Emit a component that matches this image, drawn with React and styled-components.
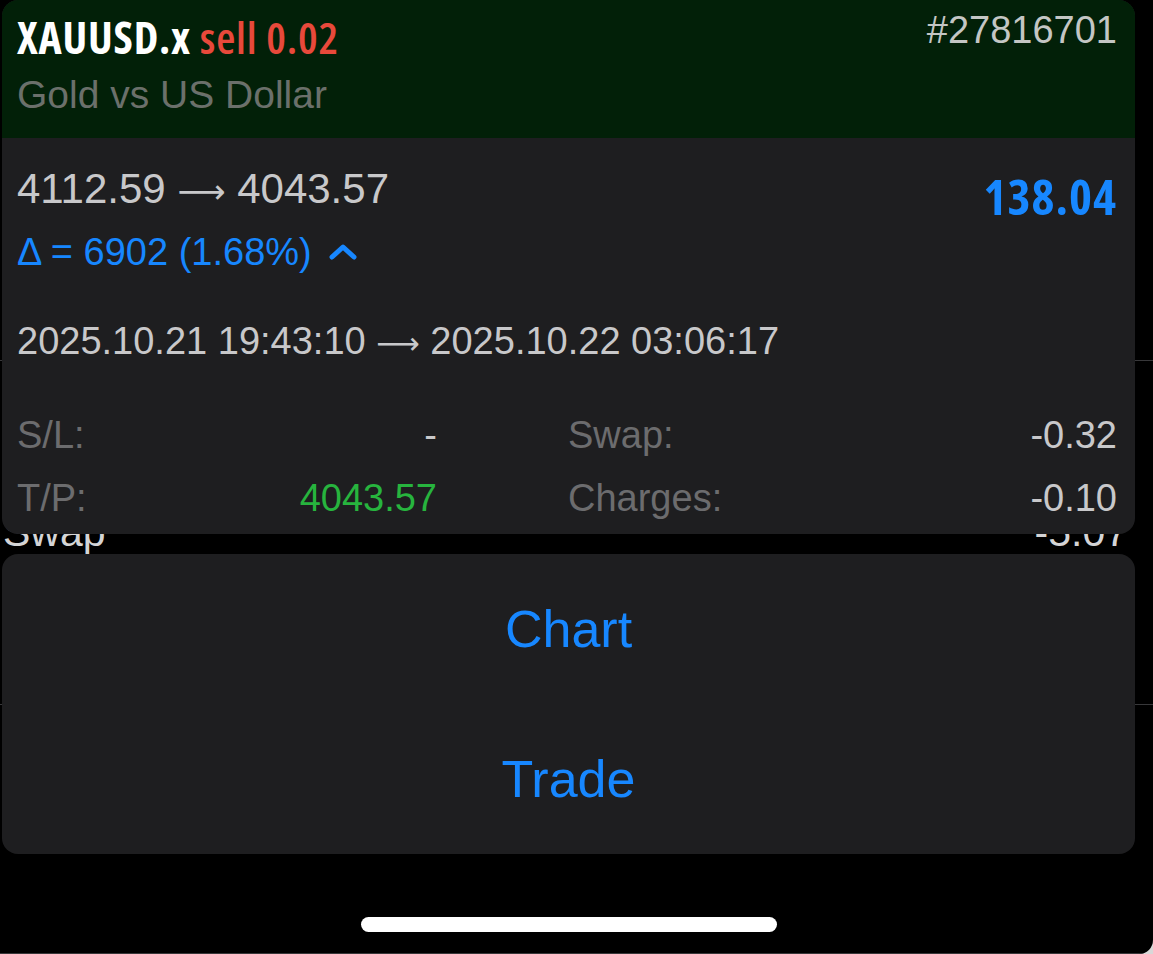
import React from "react";
import styled, { createGlobalStyle } from "styled-components";

const GlobalStyle = createGlobalStyle`
  html, body {
    margin: 0;
    padding: 0;
    background: #d8d8d8;
  }
  body {
    font-family: "Liberation Sans", Arial, sans-serif;
  }
`;

const condensed = `
  font-family: "Open Sans", "Liberation Sans Narrow", "DejaVu Sans Condensed", sans-serif;
  font-stretch: 75%;
  font-weight: 700;
`;

const Screen = styled.div`
  position: relative;
  width: 1153px;
  height: 954px;
  background: #000;
  overflow: hidden;
  border-bottom-right-radius: 14px;
`;

const List = styled.div`
  display: flex;
  flex-direction: column;
`;

const ListRow = styled.div`
  display: flex;
  align-items: center;
  justify-content: space-between;
  height: ${(p) => p.$h}px;
  padding: 0 25px 0 3px;
  border-bottom: 1px solid #38383a;
  box-sizing: border-box;
  color: #d4d4d6;
  font-size: 41px;
`;

const Overlay = styled.div`
  position: absolute;
  top: 0;
  left: 2px;
  width: 1133px;
  display: flex;
  flex-direction: column;
`;

const Card = styled.div`
  background: #1e1e20;
  border-radius: 16px;
  overflow: hidden;
`;

const Header = styled.div`
  background: #022008;
  padding: 12px 18px 20px 15px;
`;

const TitleRow = styled.div`
  display: flex;
  justify-content: space-between;
  align-items: flex-start;
`;

const Title = styled.div`
  ${condensed}
  font-size: 44px;
  letter-spacing: 0.8px;
  line-height: 50px;
  color: #ffffff;
`;

const Side = styled.span`
  color: #e8493b;
  font-weight: 600;
`;

const Ticket = styled.div`
  font-size: 38px;
  line-height: 36px;
  color: #c4c6c4;
`;

const Subtitle = styled.div`
  margin-top: 10px;
  font-size: 39px;
  line-height: 46px;
  color: #6b706b;
`;

const Body = styled.div`
  padding: 26px 18px 13px 15px;
`;

const PriceRow = styled.div`
  display: flex;
  justify-content: space-between;
  align-items: flex-start;
`;

const PriceCol = styled.div`
  display: flex;
  flex-direction: column;
`;

const Prices = styled.div`
  font-size: 42px;
  line-height: 50px;
  color: #c8c8ca;
`;

const Arrow = styled.span`
  font-family: "DejaVu Sans", sans-serif;
  font-weight: 400;
  font-size: 0.8em;
  line-height: 1;
`;

const Delta = styled.div`
  display: flex;
  align-items: center;
  gap: 17px;
  margin-top: 15px;
  font-size: 38px;
  line-height: 46px;
  color: #1787ff;
`;

const Profit = styled.div`
  ${condensed}
  margin-top: 7px;
  font-size: 49px;
  letter-spacing: 1px;
  line-height: 50px;
  color: #1787ff;
`;

const Dates = styled.div`
  margin-top: 43px;
  font-size: 38px;
  line-height: 46px;
  color: #c8c8ca;
`;

const Stats = styled.div`
  display: grid;
  grid-template-columns: 420px 549px;
  column-gap: 131px;
  row-gap: 17px;
  margin-top: 48px;
`;

const Stat = styled.div`
  display: flex;
  justify-content: space-between;
  font-size: 38px;
  line-height: 46px;
`;

const Label = styled.span`
  color: #6c6c6e;
`;

const Value = styled.span`
  color: ${(p) => p.$color || "#c8c8ca"};
`;

const Actions = styled.div`
  margin-top: 20px;
  background: #1e1e20;
  border-radius: 16px;
  display: flex;
  flex-direction: column;
`;

const Action = styled.button`
  height: 150px;
  border: none;
  background: transparent;
  color: #1787ff;
  font-family: "Liberation Sans", Arial, sans-serif;
  font-size: 52px;
  padding: 0;
  cursor: pointer;
`;

const HomeIndicator = styled.div`
  align-self: center;
  margin-top: 63px;
  width: 416px;
  height: 15px;
  border-radius: 8px;
  background: #ffffff;
`;

const Chevron = () => (
  <svg width="28" height="18" viewBox="0 0 28 18" aria-hidden="true">
    <polyline
      points="3,14 14,4 25,14"
      fill="none"
      stroke="#1787ff"
      strokeWidth="5"
      strokeLinecap="round"
      strokeLinejoin="round"
    />
  </svg>
);

export default function App() {
  return (
    <>
      <GlobalStyle />
      <Screen>
        <List>
          <ListRow $h={361} />
          <ListRow $h={344}>
            <span>Swap</span>
            <span>-5.07</span>
          </ListRow>
          <ListRow $h={249} />
        </List>

        <Overlay>
          <Card>
            <Header>
              <TitleRow>
                <Title>
                  XAUUSD.x <Side>sell 0.02</Side>
                </Title>
                <Ticket>#27816701</Ticket>
              </TitleRow>
              <Subtitle>Gold vs US Dollar</Subtitle>
            </Header>
            <Body>
              <PriceRow>
                <PriceCol>
                  <Prices>
                    4112.59 <Arrow>⟶</Arrow> 4043.57
                  </Prices>
                  <Delta>
                    <span>Δ = 6902 (1.68%)</span>
                    <Chevron />
                  </Delta>
                </PriceCol>
                <Profit>138.04</Profit>
              </PriceRow>
              <Dates>
                2025.10.21 19:43:10 <Arrow>⟶</Arrow> 2025.10.22 03:06:17
              </Dates>
              <Stats>
                <Stat>
                  <Label>S/L:</Label>
                  <Value>-</Value>
                </Stat>
                <Stat>
                  <Label>Swap:</Label>
                  <Value>-0.32</Value>
                </Stat>
                <Stat>
                  <Label>T/P:</Label>
                  <Value $color="#27b43e">4043.57</Value>
                </Stat>
                <Stat>
                  <Label>Charges:</Label>
                  <Value>-0.10</Value>
                </Stat>
              </Stats>
            </Body>
          </Card>
          <Actions>
            <Action>Chart</Action>
            <Action>Trade</Action>
          </Actions>
          <HomeIndicator />
        </Overlay>
      </Screen>
    </>
  );
}
